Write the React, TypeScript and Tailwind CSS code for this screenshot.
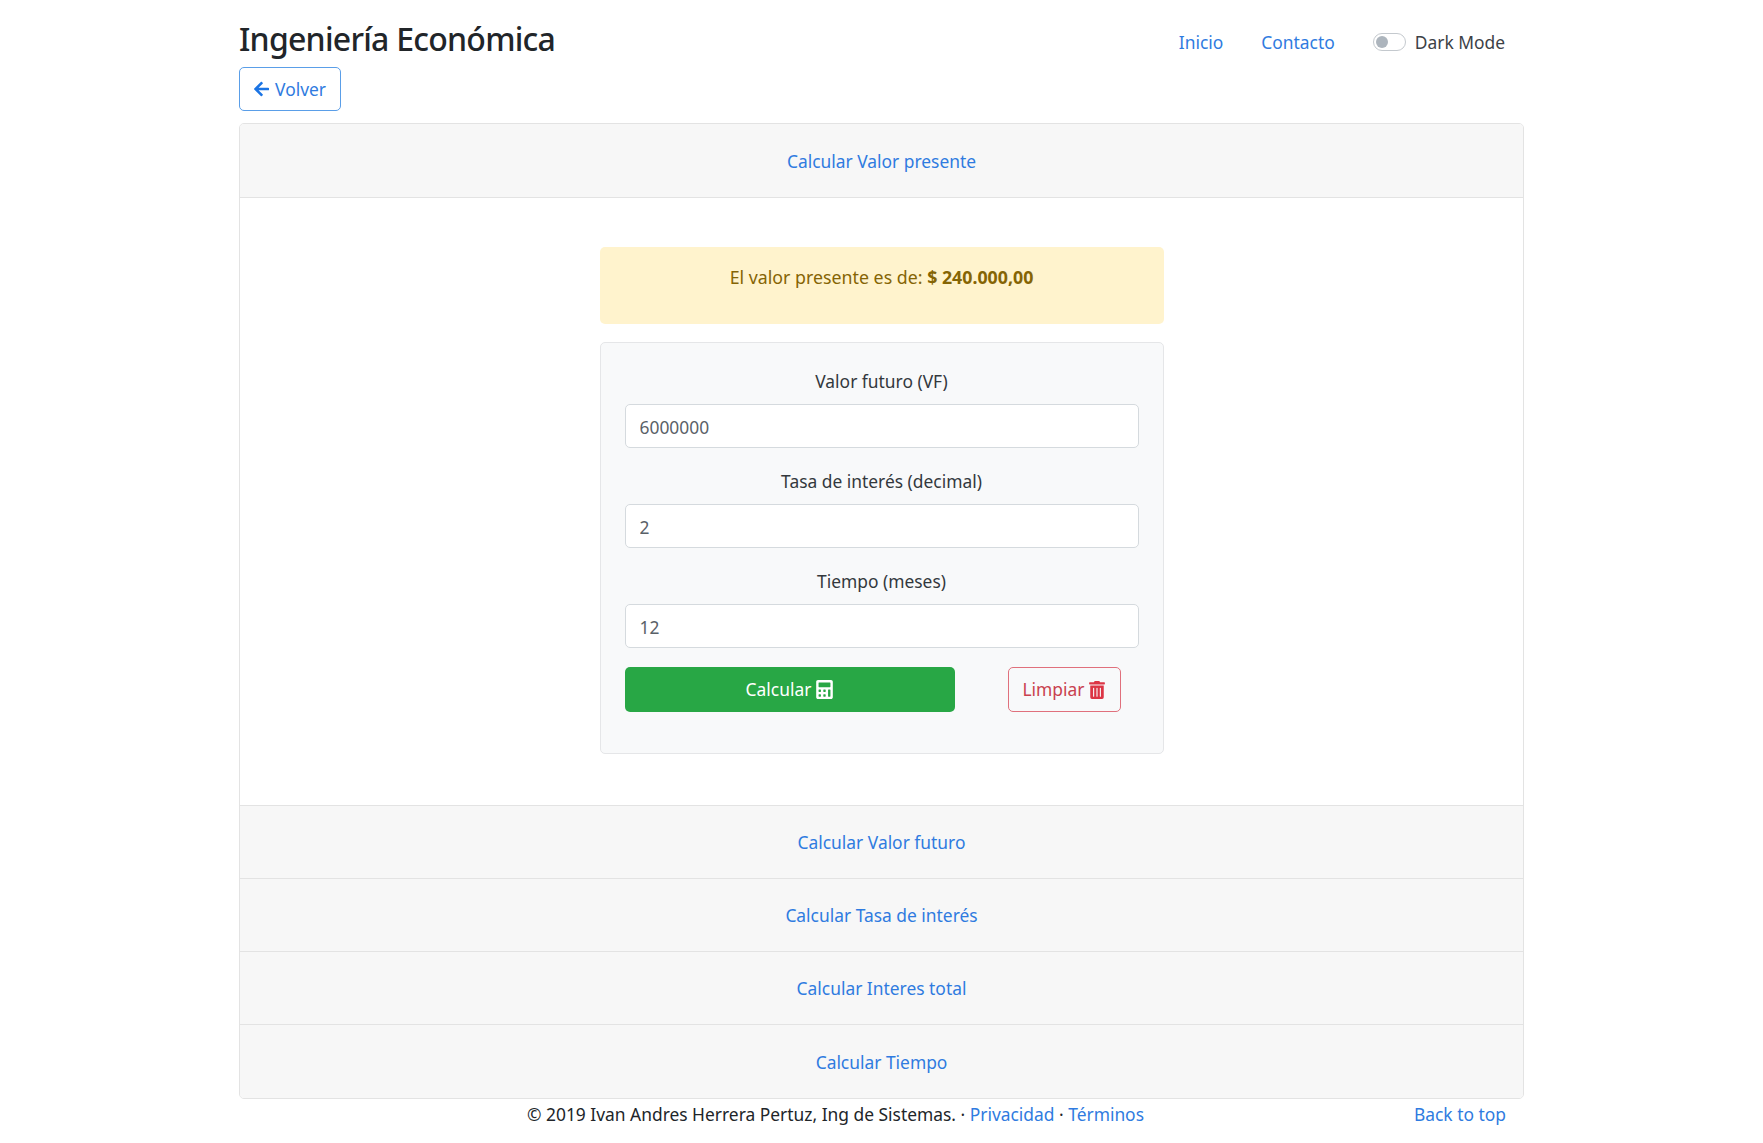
import { FaArrowLeft, FaCalculator, FaTrashAlt } from 'react-icons/fa';

const link = 'text-[#2f7be0]';

function Field({ label, value }: { label: string; value: string }) {
  return (
    <div>
      <label className="block text-center h-[27px] mb-[9px] text-[#33383d]">{label}</label>
      <input
        readOnly
        value={value}
        className="block w-full h-[44px] pl-[14px] pr-[14px] pt-[1px] bg-white border border-[#d5dade] rounded-[5px] text-[#5a6168] outline-none"
      />
    </div>
  );
}

function AccordionHeader({ title, h }: { title: string; h: string }) {
  return (
    <div className={`${h} flex items-center justify-center pt-[1px] bg-[#f7f7f7] border-b border-[#e3e3e3] last:border-b-0 ${link}`}>
      {title}
    </div>
  );
}

export default function App() {
  return (
    <div className="w-[1285px] mx-auto text-[17.4px] leading-[27px] text-[#212529] bg-white" style={{ fontFamily: '"Noto Sans", sans-serif' }}>
      {/* Header */}
      <header className="flex justify-between h-[67px]">
        <h1 className="text-[32px] leading-[40px] pt-[19px] font-medium tracking-[-0.75px]">Ingeniería Económica</h1>
        <nav className="flex items-center gap-[38px] pr-[19px] h-[84px]">
          <a className={link}>Inicio</a>
          <a className={link}>Contacto</a>
          <div className="flex items-center gap-[9px] text-[#3c4146]">
            <span className="relative w-[33px] h-[18px] rounded-full bg-white border border-[#c4c9ce]">
              <span className="absolute left-[2px] top-[2px] w-[12px] h-[12px] rounded-full bg-[#adb5bd]" />
            </span>
            Dark Mode
          </div>
        </nav>
      </header>

      <button className={`flex items-center gap-[6px] h-[44px] w-[102px] px-[14px] border border-[#5a9ee8] rounded-[5px] ${link}`}>
        <FaArrowLeft className="text-[#1b74e4] w-[18px] h-[18px]" />
        Volver
      </button>

      {/* Accordion */}
      <div className="mt-[12px] border border-[#e3e3e3] rounded-[5px] overflow-hidden">
        <AccordionHeader title="Calcular Valor presente" h="h-[74px]" />
        <div className="border-b border-[#e3e3e3] pt-[49px] pb-[51px] flex flex-col items-center">
          <div className="w-[564px] h-[77px] bg-[#fff3cd] rounded-[5px] pt-[17px] text-center text-[17.8px] text-[#856404]">
            El valor presente es de: <b className="font-bold">$ 240.000,00</b>
          </div>
          <div className="w-[564px] h-[412px] mt-[18px] bg-[#f8f9fa] border border-[#e5e6e8] rounded-[5px] pt-[25px] px-[24px]">
            <div className="flex flex-col gap-[20px] mb-[19px]">
              <Field label="Valor futuro (VF)" value="6000000" />
              <Field label="Tasa de interés (decimal)" value="2" />
              <Field label="Tiempo (meses)" value="12" />
            </div>
            <div className="flex justify-between pr-[18px]">
              <button className="flex items-center justify-center gap-[5px] w-[330px] h-[45px] bg-[#28a745] rounded-[5px] text-white">
                Calcular <FaCalculator className="w-[17px] h-[19px]" />
              </button>
              <button className="flex items-center justify-center gap-[5px] w-[113px] h-[45px] border border-[#e0707c] rounded-[5px] text-[#c9414f]">
                Limpiar <FaTrashAlt className="w-[16px] h-[18px] text-[#dc3545]" />
              </button>
            </div>
          </div>
        </div>
        <AccordionHeader title="Calcular Valor futuro" h="h-[73px]" />
        <AccordionHeader title="Calcular Tasa de interés" h="h-[73px]" />
        <AccordionHeader title="Calcular Interes total" h="h-[73px]" />
        <AccordionHeader title="Calcular Tiempo" h="h-[73px]" />
      </div>

      {/* Footer */}
      <footer className="relative text-center pt-[2px] pr-[92px] h-[30px]">
        <span>
          © 2019 Ivan Andres Herrera Pertuz, Ing de Sistemas. · <a className={link}>Privacidad</a> · <a className={link}>Términos</a>
        </span>
        <a className={`absolute right-[18px] top-[2px] ${link}`}>Back to top</a>
      </footer>
    </div>
  );
}
